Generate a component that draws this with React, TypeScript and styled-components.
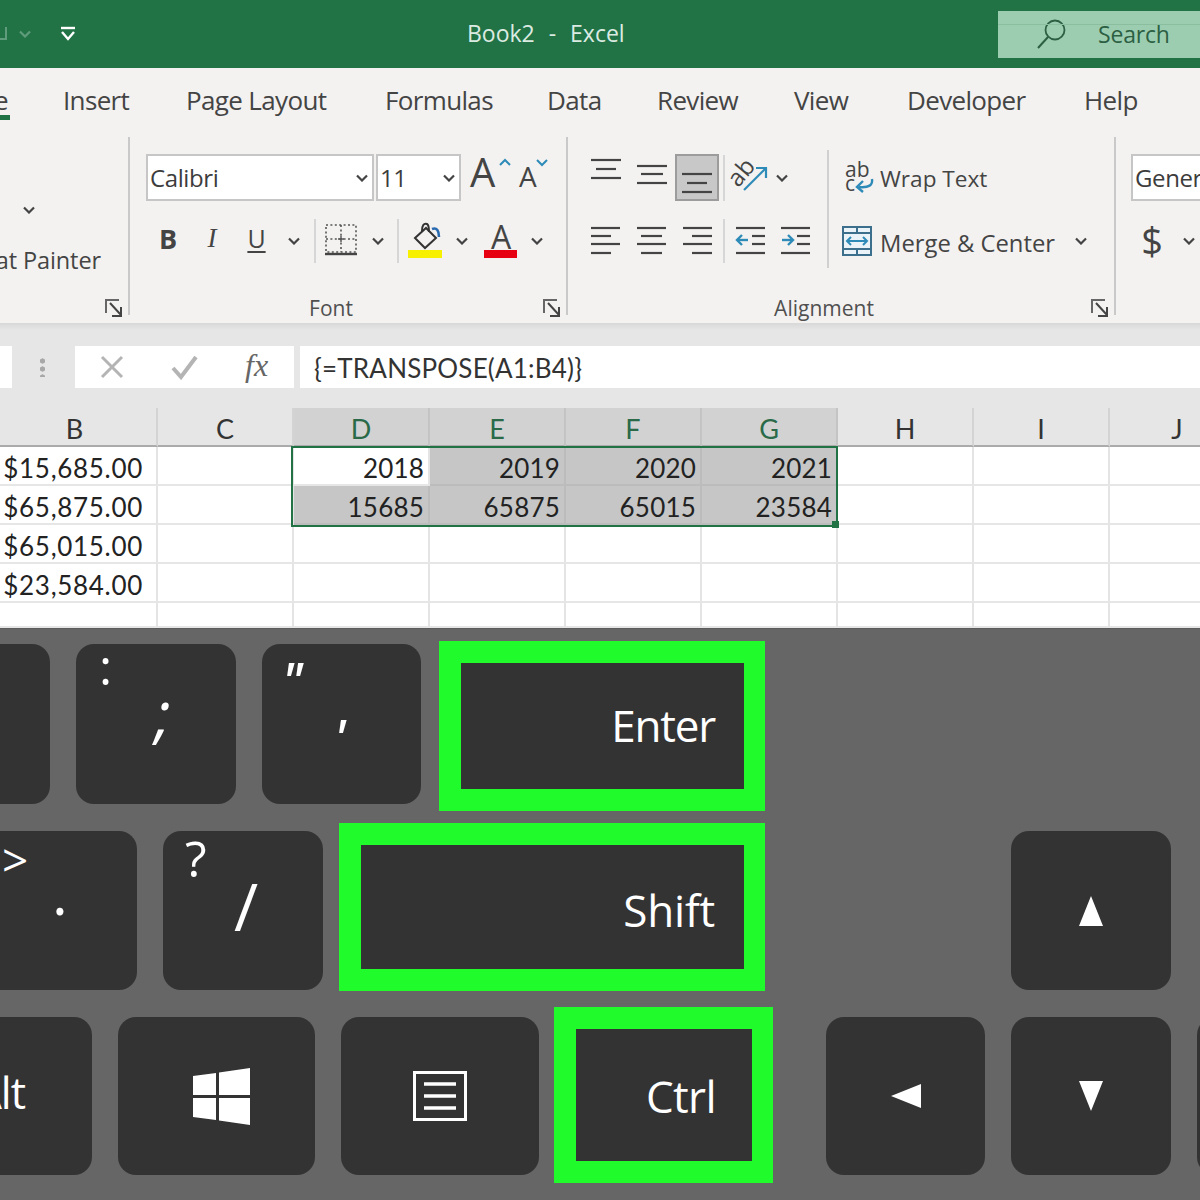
import React from "react";
import styled, { createGlobalStyle } from "styled-components";

const GlobalStyle = createGlobalStyle`
  html, body { margin: 0; padding: 0; background: #666; }
  * { box-sizing: border-box; }
`;

const UI_FONT = `"Open Sans", "Liberation Sans", sans-serif`;
const SHEET_FONT = `Lato, "Liberation Sans", sans-serif`;
const INK = "#444";
const BLUE = "#2e8bb8";

const Page = styled.div`
  width: 1200px;
  height: 1200px;
  overflow: hidden;
  display: flex;
  flex-direction: column;
  font-family: ${UI_FONT};
  background: #666;
`;

/* title bar */
const TitleBar = styled.div`
  height: 68px;
  flex: none;
  display: flex;
  align-items: center;
  background: #217346;
  color: #dcebe2;
`;

const QuickAccess = styled.div`
  width: 467px;
  height: 100%;
  flex: none;
  display: flex;
  align-items: center;
  gap: 10px;
`;

const Title = styled.div`
  font-size: 23px;
  letter-spacing: 0;
  word-spacing: 1px;
  white-space: pre;
  margin-top: -2px;
`;

const SearchBox = styled.div`
  position: relative;
  width: 202px;
  height: 47px;
  margin-left: auto;
  display: flex;
  align-items: center;
  gap: 30px;
  padding-left: 38px;
  background: #9dcdb0;
  color: #2c5f43;
  font-size: 23px;
  letter-spacing: -0.2px;

  &::before {
    content: "";
    position: absolute;
    left: 0;
    right: 0;
    top: 13px;
    height: 1px;
    background: #8bbd9f;
  }
`;

/* ribbon */
const Ribbon = styled.div`
  flex: none;
  height: 255px;
  background: #f3f2f1;
  color: ${INK};
  overflow: hidden;
`;

const TabRow = styled.div`
  height: 67px;
  display: flex;
  align-items: center;
  margin-left: -63px;
  padding-bottom: 4px;
`;

const Tab = styled.div<{ $w: number }>`
  width: ${(p) => p.$w}px;
  flex: none;
  font-size: 26px;
  letter-spacing: -0.65px;
  white-space: nowrap;
`;

const ActiveLabel = styled.span`
  position: relative;

  &::after {
    content: "";
    position: absolute;
    left: 0;
    right: -2px;
    bottom: -2px;
    height: 5px;
    background: #217346;
  }
`;

const Groups = styled.div`
  height: 188px;
  display: flex;
`;

const Group = styled.div<{ $w: number }>`
  width: ${(p) => p.$w}px;
  flex: none;
  display: flex;
  flex-direction: column;
`;

const GroupSep = styled.div`
  width: 2px;
  height: 178px;
  margin-top: 2px;
  flex: none;
  background: #c9c9c9;
`;

const GroupBody = styled.div<{ $pl?: number }>`
  flex: 1;
  padding: 19px 0 0 ${(p) => p.$pl ?? 16}px;
  min-height: 0;
`;

const GroupFooter = styled.div`
  height: 30px;
  flex: none;
  display: flex;
  align-items: center;
`;

const GroupLabel = styled.div`
  flex: 1;
  text-align: center;
  font-size: 21px;
  color: #505050;
`;

const LauncherCell = styled.div`
  width: 34px;
  flex: none;
  display: flex;
  justify-content: flex-end;
  padding-right: 5px;
`;

const ToolRow = styled.div<{ $h: number; $mb?: number }>`
  height: ${(p) => p.$h}px;
  margin-bottom: ${(p) => p.$mb ?? 0}px;
  display: flex;
  align-items: center;
  white-space: nowrap;
`;

const Cell = styled.div<{ $w: number; $active?: boolean }>`
  width: ${(p) => p.$w}px;
  height: 100%;
  flex: none;
  display: flex;
  align-items: center;
  justify-content: center;
  background: ${(p) => (p.$active ? "#c8c8c8" : "transparent")};
  border: ${(p) => (p.$active ? "2px solid #9c9c9c" : "none")};
`;

const MiniSep = styled.div<{ $ml: number; $h?: number }>`
  width: 2px;
  height: ${(p) => p.$h ?? 44}px;
  margin-left: ${(p) => p.$ml}px;
  flex: none;
  background: #d6d6d6;
`;

const Combo = styled.div<{ $w: number; $ml?: number }>`
  width: ${(p) => p.$w}px;
  height: 47px;
  margin-left: ${(p) => p.$ml ?? 0}px;
  flex: none;
  display: flex;
  align-items: center;
  justify-content: space-between;
  padding: 0 3px 0 2px;
  background: #fff;
  border: 2px solid #c6c6c6;
  font-size: 24px;
  letter-spacing: -0.4px;
  color: #3c3c3c;
`;

const FontStyleGlyph = styled.span<{ $kind: "b" | "i" | "u" }>`
  font-size: ${(p) => (p.$kind === "u" ? 25 : 27)}px;
  line-height: 1;
  margin-top: -5px;
  font-family: ${(p) => (p.$kind === "i" ? `"Liberation Serif", serif` : UI_FONT)};
  font-weight: ${(p) => (p.$kind === "b" ? 700 : 400)};
  font-style: ${(p) => (p.$kind === "i" ? "italic" : "normal")};
  text-decoration: ${(p) => (p.$kind === "u" ? "underline" : "none")};
  text-underline-offset: 3px;
  text-decoration-thickness: 2px;
`;

const Dollar = styled.span`
  font-size: 38px;
  line-height: 1;
  margin-top: -2px;
  color: ${INK};
`;

const ButtonText = styled.span<{ $w?: number; $dy?: number; $size: number }>`
  display: inline-block;
  width: ${(p) => (p.$w ? `${p.$w}px` : "auto")};
  margin-top: ${(p) => p.$dy ?? 0}px;
  font-size: ${(p) => p.$size}px;
`;

const ClipboardChevron = styled.div`
  height: 8px;
  margin: 52px 0 31px 6px;
  display: flex;
`;

const ClipboardLabel = styled.div`
  width: 101px;
  margin-left: -16px;
  height: 30px;
  display: flex;
  justify-content: flex-end;
  align-items: center;
  white-space: nowrap;
  font-size: 23.5px;
  letter-spacing: -0.1px;
`;

const AlignmentBody = styled.div`
  display: flex;
`;

const AlignBlock = styled.div`
  width: 244px;
  flex: none;
`;

const TallSep = styled.div`
  width: 2px;
  height: 118px;
  margin-top: -4px;
  flex: none;
  background: #d0d0d0;
`;

const WrapBlock = styled.div`
  padding-left: 12px;
  flex: 1;
`;

/* formula bar */
const FormulaArea = styled.div`
  flex: none;
  height: 85px;
  background: linear-gradient(#d8d8d8 0, #e6e6e6 7px);
  padding-top: 23px;
  display: flex;
  align-items: flex-start;
`;

const FormulaBox = styled.div<{ $w?: number; $ml?: number }>`
  height: 42px;
  width: ${(p) => (p.$w ? `${p.$w}px` : "auto")};
  flex: ${(p) => (p.$w ? "none" : 1)};
  margin-left: ${(p) => p.$ml ?? 0}px;
  background: #fff;
  display: flex;
  align-items: center;
`;

const Grip = styled.div`
  width: 5px;
  height: 20px;
  flex: none;
  margin: 11px 0 0 28px;
  background: radial-gradient(circle, #a8a8a8 2.4px, transparent 2.8px) 0 0 / 5px 8px;
`;

const FormulaText = styled.div`
  padding: 2px 0 0 14px;
  font-family: ${SHEET_FONT};
  font-size: 26px;
  color: #333;
  letter-spacing: 0.2px;
`;

const CommitGlyphs = styled.div`
  display: flex;
  align-items: center;
  padding-left: 24px;
  gap: 46px;
`;

const FxGlyph = styled.span`
  font-family: "Liberation Serif", serif;
  font-style: italic;
  font-size: 32px;
  color: #666;
  margin-top: -4px;
`;

/* sheet */
const SheetWrap = styled.div`
  position: relative;
  height: 220px;
  flex: none;
  overflow: hidden;
  background: #fff;
`;

const SheetGrid = styled.div`
  display: grid;
  width: 1246px;
  grid-template-columns: 158px repeat(8, 136px);
  grid-template-rows: repeat(5, 39px) 25px;
  font-family: ${SHEET_FONT};
`;

const ColHead = styled.div<{ $selected?: boolean; $first?: boolean }>`
  display: flex;
  align-items: center;
  justify-content: center;
  padding: 4px ${(p) => (p.$first ? 7 : 0)}px 0 0;
  font-size: 27px;
  font-weight: 400;
  background: ${(p) => (p.$selected ? "#d2d2d2" : "#e6e6e6")};
  color: ${(p) => (p.$selected ? "#2a6a49" : "#333")};
  border-right: 2px solid ${(p) => (p.$selected ? "#c4c4c4" : "#d4d4d4")};
  border-bottom: 2px solid #ababab;
`;

const DataCell = styled.div<{ $selected?: boolean; $wide?: boolean }>`
  display: flex;
  align-items: center;
  justify-content: flex-end;
  padding: 4px ${(p) => (p.$wide ? 13 : 4)}px 0 0;
  font-size: 26px;
  letter-spacing: ${(p) => (p.$wide ? 0.7 : 0.2)}px;
  color: #222;
  background: ${(p) => (p.$selected ? "#c6c6c6" : "#fff")};
  border-right: 2px solid ${(p) => (p.$selected ? "#bcbcbc" : "#e4e4e4")};
  border-bottom: 2px solid ${(p) => (p.$selected ? "#bcbcbc" : "#e6e6e6")};
`;

const SelectionFrame = styled.div`
  position: absolute;
  left: 291px;
  top: 38px;
  width: 547px;
  height: 81px;
  border: 2px solid #217346;
  pointer-events: none;

  &::after {
    content: "";
    position: absolute;
    right: -3px;
    bottom: -3px;
    width: 7px;
    height: 7px;
    background: #217346;
  }
`;

/* keyboard */
const Keyboard = styled.div`
  flex: 1;
  background: #666;
  border-top: 1px solid #5c5c5c;
  color: #fff;
`;

const KeyRow = styled.div<{ $mt: number; $ml: number; $h: number }>`
  display: flex;
  align-items: flex-start;
  height: ${(p) => p.$h}px;
  margin-top: ${(p) => p.$mt}px;
  margin-left: ${(p) => p.$ml}px;
`;

const Key = styled.div<{ $w: number; $h: number; $mt: number; $ml?: number; $center?: boolean }>`
  width: ${(p) => p.$w}px;
  height: ${(p) => p.$h}px;
  margin-top: ${(p) => p.$mt}px;
  margin-left: ${(p) => p.$ml ?? 0}px;
  flex: none;
  display: flex;
  flex-direction: column;
  align-items: ${(p) => (p.$center ? "center" : "flex-start")};
  justify-content: ${(p) => (p.$center ? "center" : "flex-start")};
  background: #333;
  border-radius: 18px;
  overflow: hidden;
`;

const Legend = styled.span<{ $size: number; $x: number; $y: number; $slant?: boolean; $bold?: boolean }>`
  font-size: ${(p) => p.$size}px;
  line-height: 1;
  height: ${(p) => p.$size}px;
  margin-left: ${(p) => p.$x}px;
  margin-top: ${(p) => p.$y}px;
  font-style: ${(p) => (p.$slant ? "italic" : "normal")};
  font-weight: ${(p) => (p.$bold ? 600 : 400)};
`;

const AltText = styled.span`
  align-self: flex-end;
  margin: 51px 67px 0 0;
  font-size: 43px;
  line-height: 50px;
  letter-spacing: -1px;
`;

const HighlightKey = styled.div<{ $w: number; $h: number; $ml: number; $pr: number; $ls: number; $dy: number }>`
  width: ${(p) => p.$w}px;
  height: ${(p) => p.$h}px;
  margin-left: ${(p) => p.$ml}px;
  flex: none;
  display: flex;
  align-items: center;
  justify-content: flex-end;
  padding-right: ${(p) => p.$pr}px;
  padding-top: ${(p) => Math.max(p.$dy, 0)}px;
  padding-bottom: ${(p) => Math.max(-p.$dy, 0)}px;
  background: #333;
  border-style: solid;
  border-color: #1ffb2b;
  border-width: 22px 21px 22px 22px;
  font-size: 44px;
  letter-spacing: ${(p) => p.$ls}px;
`;

const Chevron = ({ color = INK }: { color?: string }) => (
  <svg width="14" height="8" viewBox="0 0 14 8" style={{ flex: "none" }}>
    <polyline points="2,1.5 7,6.5 12,1.5" fill="none" stroke={color} strokeWidth="2.2" />
  </svg>
);

const Launcher = () => (
  <svg width="18" height="20" viewBox="0 0 18 20">
    <path d="M1 15V2h13" fill="none" stroke="#666" strokeWidth="2" />
    <path d="M5 5l11 12M16 9v9H7" fill="none" stroke="#444" strokeWidth="2" />
  </svg>
);

const Lines = ({ h, lines }: { h: number; lines: [number, number, number][] }) => (
  <svg width="30" height={h} viewBox={`0 0 30 ${h}`}>
    {lines.map(([a, b, y], i) => (
      <line key={i} x1={a} x2={b} y1={y} y2={y} stroke={INK} strokeWidth="2.2" />
    ))}
  </svg>
);

const IndentIcon = ({ dir }: { dir: "in" | "out" }) => (
  <svg width="30" height="42" viewBox="0 0 30 42">
    <line x1="1" x2="30" y1="8" y2="8" stroke={INK} strokeWidth="2.2" />
    <line x1="17" x2="30" y1="16" y2="16" stroke={INK} strokeWidth="2.2" />
    <line x1="17" x2="30" y1="24" y2="24" stroke={INK} strokeWidth="2.2" />
    <line x1="1" x2="30" y1="33" y2="33" stroke={INK} strokeWidth="2.2" />
    <line x1="2" x2="13" y1="20" y2="20" stroke={BLUE} strokeWidth="2.4" />
    {dir === "out" ? (
      <polyline points="7,15 2,20 7,25" fill="none" stroke={BLUE} strokeWidth="2.4" />
    ) : (
      <polyline points="8,15 13,20 8,25" fill="none" stroke={BLUE} strokeWidth="2.4" />
    )}
  </svg>
);

const OrientationIcon = () => (
  <svg width="50" height="47" viewBox="0 0 50 47">
    <text
      x="17"
      y="26"
      textAnchor="middle"
      fontSize="24"
      fontFamily={UI_FONT}
      fill={INK}
      transform="rotate(-50 17 19)"
    >
      ab
    </text>
    <line x1="19" y1="36" x2="40" y2="15" stroke={BLUE} strokeWidth="2.2" />
    <polyline points="31,14 41,14 41,24" fill="none" stroke={BLUE} strokeWidth="2.2" />
  </svg>
);

const WrapIcon = () => (
  <svg width="39" height="47" viewBox="0 0 39 47" style={{ flex: "none" }}>
    <text x="4" y="23" fontSize="21" fontFamily={UI_FONT} fill={INK}>
      ab
    </text>
    <text x="4" y="37" fontSize="21" fontFamily={UI_FONT} fill={INK}>
      c
    </text>
    <path d="M31 25c1 6-3 9-13 8" fill="none" stroke={BLUE} strokeWidth="2.4" />
    <polyline points="22,27 16,33 22,38" fill="none" stroke={BLUE} strokeWidth="2.4" />
  </svg>
);

const MergeIcon = () => (
  <svg width="39" height="42" viewBox="0 0 39 42" style={{ flex: "none" }}>
    <rect x="2" y="7" width="28" height="28" fill="#eaf3f8" stroke="#3c6f8c" strokeWidth="2" />
    <path d="M2 13h28M2 29h28M16 7v6M16 29v6" stroke="#3c6f8c" strokeWidth="2" />
    <path d="M6 21h20" stroke={BLUE} strokeWidth="2" />
    <path d="M10 17l-4 4 4 4M22 17l4 4-4 4" fill="none" stroke={BLUE} strokeWidth="2" />
  </svg>
);

const BorderIcon = () => (
  <svg width="50" height="42" viewBox="0 0 50 42">
    <g stroke="#555" strokeWidth="1.6" strokeDasharray="2 2.4" fill="none">
      <rect x="10" y="5" width="30" height="27" />
      <path d="M25 5v27M10 19h30" />
    </g>
    <path d="M22 19h6M25 16v6" stroke="#555" strokeWidth="1.4" />
    <line x1="9" x2="41" y1="34" y2="34" stroke={INK} strokeWidth="2.4" />
  </svg>
);

const FillIcon = () => (
  <svg width="54" height="42" viewBox="0 0 54 42">
    <path d="M16 18L27 8l10 10-11 10z" fill="none" stroke="#333" strokeWidth="2" />
    <path d="M23 11c0-6 2-8 5-7 2 1 2 5 2 8" fill="none" stroke="#333" strokeWidth="2" />
    <path d="M33 9c5-2 7 2 7 8" fill="none" stroke="#2a6bb0" strokeWidth="2.6" />
    <rect x="9" y="30" width="34" height="8" fill="#f7f000" />
  </svg>
);

const FontColorIcon = () => (
  <svg width="60" height="42" viewBox="0 0 60 42">
    <text x="30" y="29" textAnchor="middle" fontSize="32" fontFamily={UI_FONT} fill={INK}>
      A
    </text>
    <rect x="13" y="30" width="33" height="8" fill="#e60012" />
  </svg>
);

const SizeIcon = ({ w, size, x, caret }: { w: number; size: number; x: number; caret: string }) => (
  <svg width={w} height="47" viewBox={`0 0 ${w} 47`}>
    <text x={x} y="33" fontSize={size} fontFamily={UI_FONT} fill={INK}>
      A
    </text>
    <polyline points={caret} fill="none" stroke={BLUE} strokeWidth="2" />
  </svg>
);

const QuickFaded = () => (
  <svg width="8" height="16" viewBox="0 0 8 16" style={{ flex: "none" }}>
    <path d="M6 1v12H0" fill="none" stroke="#5f9c7b" strokeWidth="2" />
  </svg>
);

const QuickMenuIcon = () => (
  <svg width="18" height="16" viewBox="0 0 18 16" style={{ marginLeft: 17 }}>
    <path d="M2 2h14" stroke="#fff" strokeWidth="2.4" />
    <path d="M3 6l6 7 6-7" fill="none" stroke="#fff" strokeWidth="2.4" />
  </svg>
);

const SearchIcon = () => (
  <svg width="32" height="32" viewBox="0 0 32 32" style={{ flex: "none" }}>
    <circle cx="19" cy="12" r="9.5" fill="none" stroke="#2c5f43" strokeWidth="1.8" />
    <line x1="12" y1="19" x2="2" y2="30" stroke="#2c5f43" strokeWidth="2" />
  </svg>
);

const CancelIcon = () => (
  <svg width="26" height="26" viewBox="0 0 26 26">
    <path d="M3 3l20 20M23 3L3 23" stroke="#b4b4b4" strokeWidth="3" />
  </svg>
);

const CommitIcon = () => (
  <svg width="28" height="26" viewBox="0 0 28 26">
    <path d="M2 14l8 9L25 3" fill="none" stroke="#b4b4b4" strokeWidth="4" />
  </svg>
);

const WindowsLogo = () => (
  <svg width="57" height="57" viewBox="0 0 57 57" style={{ marginLeft: 9 }}>
    <path
      fill="#fff"
      d="M0 8l23-3v22H0zM26 4.500L57 0v27H26zM0 30h23v22L0 49zM26 30h31v27l-31-4.500z"
    />
  </svg>
);

const MenuKeyIcon = () => (
  <svg width="54" height="50" viewBox="0 0 54 50">
    <rect x="1.500" y="1.500" width="51" height="47" fill="none" stroke="#fff" strokeWidth="3" />
    <path d="M11 13h32M11 25h32M11 37h32" stroke="#fff" strokeWidth="3.500" />
  </svg>
);

const Triangle = ({ w, h, points }: { w: number; h: number; points: string }) => (
  <svg width={w} height={h} viewBox={`0 0 ${w} ${h}`}>
    <polygon points={points} fill="#fff" />
  </svg>
);

const TABS = [
  { label: "Home", w: 126 },
  { label: "Insert", w: 123 },
  { label: "Page Layout", w: 199 },
  { label: "Formulas", w: 162 },
  { label: "Data", w: 110 },
  { label: "Review", w: 137 },
  { label: "View", w: 113 },
  { label: "Developer", w: 177 },
  { label: "Help", w: 100 },
];

const COLUMNS = ["B", "C", "D", "E", "F", "G", "H", "I", "J"];
const SELECTED_COLUMNS = ["D", "E", "F", "G"];

const ROWS: Record<string, string>[] = [
  { B: "$15,685.00", D: "2018", E: "2019", F: "2020", G: "2021" },
  { B: "$65,875.00", D: "15685", E: "65875", F: "65015", G: "23584" },
  { B: "$65,015.00" },
  { B: "$23,584.00" },
  {},
];

const isSelectedCell = (col: string, row: number) =>
  row < 2 && SELECTED_COLUMNS.includes(col) && !(row === 0 && col === "D");

export default function App() {
  return (
    <Page>
      <GlobalStyle />
      <TitleBar>
        <QuickAccess>
          <QuickFaded />
          <Chevron color="#5f9c7b" />
          <QuickMenuIcon />
        </QuickAccess>
        <Title>Book2  -  Excel</Title>
        <SearchBox>
          <SearchIcon />
          Search
        </SearchBox>
      </TitleBar>

      <Ribbon>
        <TabRow>
          {TABS.map((t) => (
            <Tab key={t.label} $w={t.w}>
              {t.label === "Home" ? <ActiveLabel>{t.label}</ActiveLabel> : t.label}
            </Tab>
          ))}
        </TabRow>
        <Groups>
          <Group $w={128}>
            <GroupBody>
              <ClipboardChevron>
                <Chevron />
              </ClipboardChevron>
              <ClipboardLabel>Format Painter</ClipboardLabel>
            </GroupBody>
            <GroupFooter>
              <GroupLabel />
              <LauncherCell>
                <Launcher />
              </LauncherCell>
            </GroupFooter>
          </Group>
          <GroupSep />

          <Group $w={436}>
            <GroupBody>
              <ToolRow $h={47} $mb={19}>
                <Combo $w={228}>
                  Calibri
                  <Chevron />
                </Combo>
                <Combo $w={85} $ml={2}>
                  11
                  <Chevron />
                </Combo>
                <SizeIcon w={52} size={40} x={9} caret="39,11 44,6 49,11" />
                <SizeIcon w={40} size={28} x={6} caret="24,6 29,11 34,6" />
              </ToolRow>
              <ToolRow $h={42}>
                <Cell $w={44}>
                  <FontStyleGlyph $kind="b">B</FontStyleGlyph>
                </Cell>
                <Cell $w={44}>
                  <FontStyleGlyph $kind="i">I</FontStyleGlyph>
                </Cell>
                <Cell $w={45}>
                  <FontStyleGlyph $kind="u">U</FontStyleGlyph>
                </Cell>
                <Cell $w={30}>
                  <Chevron />
                </Cell>
                <MiniSep $ml={5} />
                <Cell $w={50}>
                  <BorderIcon />
                </Cell>
                <Cell $w={24}>
                  <Chevron />
                </Cell>
                <MiniSep $ml={7} />
                <Cell $w={54}>
                  <FillIcon />
                </Cell>
                <Cell $w={18}>
                  <Chevron />
                </Cell>
                <Cell $w={60}>
                  <FontColorIcon />
                </Cell>
                <Cell $w={12}>
                  <Chevron />
                </Cell>
              </ToolRow>
            </GroupBody>
            <GroupFooter>
              <GroupLabel>Font</GroupLabel>
              <LauncherCell>
                <Launcher />
              </LauncherCell>
            </GroupFooter>
          </Group>
          <GroupSep />

          <Group $w={546}>
            <GroupBody $pl={15}>
              <AlignmentBody>
                <AlignBlock>
                  <ToolRow $h={47} $mb={19}>
                    <Cell $w={46}>
                      <Lines h={47} lines={[[0, 30, 6], [5, 25, 15], [0, 30, 24]]} />
                    </Cell>
                    <Cell $w={46}>
                      <Lines h={47} lines={[[0, 30, 12], [4, 26, 20], [0, 30, 29]]} />
                    </Cell>
                    <Cell $w={44} $active>
                      <Lines h={43} lines={[[0, 30, 18], [5, 25, 27], [0, 30, 36]]} />
                    </Cell>
                    <MiniSep $ml={4} $h={46} />
                    <Cell $w={50}>
                      <OrientationIcon />
                    </Cell>
                    <Chevron />
                  </ToolRow>
                  <ToolRow $h={42}>
                    <Cell $w={46}>
                      <Lines h={42} lines={[[0, 29, 8], [0, 20, 16], [0, 29, 24], [0, 20, 33]]} />
                    </Cell>
                    <Cell $w={46}>
                      <Lines h={42} lines={[[0, 29, 8], [4, 25, 16], [0, 29, 24], [4, 25, 33]]} />
                    </Cell>
                    <Cell $w={44}>
                      <Lines h={42} lines={[[1, 30, 8], [10, 30, 16], [1, 30, 24], [10, 30, 33]]} />
                    </Cell>
                    <MiniSep $ml={4} />
                    <Cell $w={50}>
                      <IndentIcon dir="out" />
                    </Cell>
                    <Cell $w={40}>
                      <IndentIcon dir="in" />
                    </Cell>
                  </ToolRow>
                </AlignBlock>
                <TallSep />
                <WrapBlock>
                  <ToolRow $h={47} $mb={19}>
                    <WrapIcon />
                    <ButtonText $size={22.6} $dy={2}>Wrap Text</ButtonText>
                  </ToolRow>
                  <ToolRow $h={42}>
                    <MergeIcon />
                    <ButtonText $w={194} $dy={4} $size={23.8}>
                      Merge &amp; Center
                    </ButtonText>
                    <Chevron />
                  </ToolRow>
                </WrapBlock>
              </AlignmentBody>
            </GroupBody>
            <GroupFooter>
              <GroupLabel>Alignment</GroupLabel>
              <LauncherCell>
                <Launcher />
              </LauncherCell>
            </GroupFooter>
          </Group>
          <GroupSep />

          <Group $w={84}>
            <GroupBody $pl={15}>
              <ToolRow $h={47} $mb={19}>
                <Combo $w={200}>General</Combo>
              </ToolRow>
              <ToolRow $h={42}>
                <Cell $w={42}>
                  <Dollar>$</Dollar>
                </Cell>
                <Cell $w={32}>
                  <Chevron />
                </Cell>
              </ToolRow>
            </GroupBody>
          </Group>
        </Groups>
      </Ribbon>

      <FormulaArea>
        <FormulaBox $w={12} />
        <Grip />
        <FormulaBox $w={219} $ml={30}>
          <CommitGlyphs>
            <CancelIcon />
            <CommitIcon />
            <FxGlyph>fx</FxGlyph>
          </CommitGlyphs>
        </FormulaBox>
        <FormulaBox $ml={6}>
          <FormulaText>{"{=TRANSPOSE(A1:B4)}"}</FormulaText>
        </FormulaBox>
      </FormulaArea>

      <SheetWrap>
        <SheetGrid>
          {COLUMNS.map((c) => (
            <ColHead key={c} $first={c === "B"} $selected={SELECTED_COLUMNS.includes(c)}>
              {c}
            </ColHead>
          ))}
          {ROWS.map((row, r) =>
            COLUMNS.map((c) => (
              <DataCell key={`${c}${r}`} $wide={c === "B"} $selected={isSelectedCell(c, r)}>
                {row[c]}
              </DataCell>
            ))
          )}
        </SheetGrid>
        <SelectionFrame />
      </SheetWrap>

      <Keyboard>
        <KeyRow $mt={12} $ml={-110} $h={170}>
          <Key $w={160} $h={160} $mt={3} />
          <Key $w={160} $h={160} $mt={3} $ml={26}>
            <Legend $size={50} $x={23} $y={-3}>:</Legend>
            <Legend $size={62} $x={79} $y={-10} $slant>;</Legend>
          </Key>
          <Key $w={159} $h={160} $mt={3} $ml={26}>
            <Legend $size={50} $x={20} $y={11} $slant $bold>"</Legend>
            <Legend $size={50} $x={72} $y={7} $slant $bold>'</Legend>
          </Key>
          <HighlightKey $w={326} $h={170} $ml={18} $pr={29} $ls={-1.2} $dy={-3}>Enter</HighlightKey>
        </KeyRow>
        <KeyRow $mt={12} $ml={-23} $h={168}>
          <Key $w={160} $h={159} $mt={8}>
            <Legend $size={46} $x={25} $y={5}>&gt;</Legend>
            <Legend $size={60} $x={75} $y={-20}>.</Legend>
          </Key>
          <Key $w={160} $h={159} $mt={8} $ml={26}>
            <Legend $size={50} $x={22} $y={2}>?</Legend>
            <Legend $size={66} $x={71} $y={-11}>/</Legend>
          </Key>
          <HighlightKey $w={426} $h={168} $ml={16} $pr={29} $ls={-0.2} $dy={5}>Shift</HighlightKey>
          <Key $w={160} $h={159} $mt={8} $ml={246} $center>
            <Triangle w={24} h={30} points="12,0 24,30 0,30" />
          </Key>
        </KeyRow>
        <KeyRow $mt={16} $ml={-68} $h={176}>
          <Key $w={160} $h={158} $mt={10}>
            <AltText>Alt</AltText>
          </Key>
          <Key $w={197} $h={158} $mt={10} $ml={26} $center>
            <WindowsLogo />
          </Key>
          <Key $w={198} $h={158} $mt={10} $ml={26} $center>
            <MenuKeyIcon />
          </Key>
          <HighlightKey $w={219} $h={176} $ml={15} $pr={36} $ls={-0.6} $dy={1}>Ctrl</HighlightKey>
          <Key $w={159} $h={158} $mt={10} $ml={53} $center>
            <Triangle w={30} h={24} points="0,12 30,0 30,24" />
          </Key>
          <Key $w={160} $h={158} $mt={10} $ml={26} $center>
            <Triangle w={24} h={30} points="0,0 24,0 12,30" />
          </Key>
          <Key $w={160} $h={158} $mt={10} $ml={26} />
        </KeyRow>
      </Keyboard>
    </Page>
  );
}
